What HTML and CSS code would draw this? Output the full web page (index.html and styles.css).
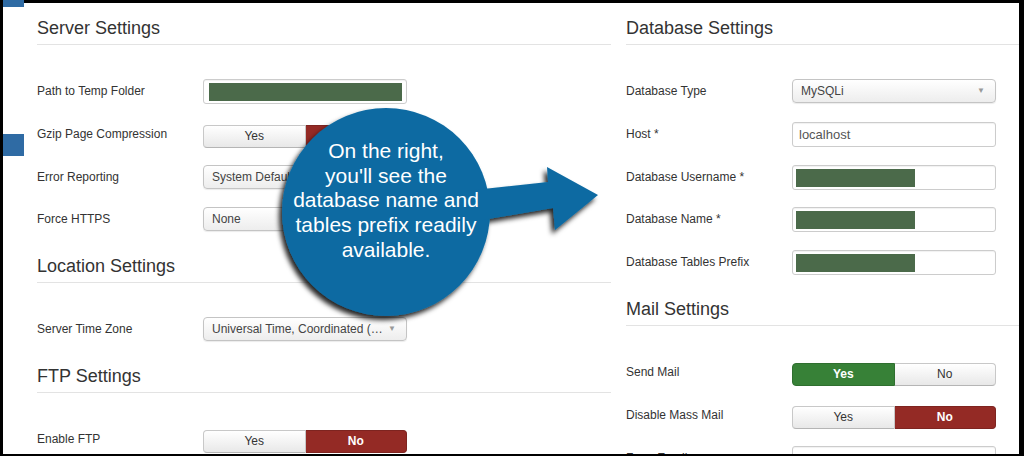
FILE: index.html
```html
<!DOCTYPE html>
<html lang="en">
<head>
<meta charset="utf-8">
<title>Global Configuration - Server</title>
<link rel="stylesheet" href="styles.css">
</head>
<body>
<div class="screen">
  <div class="page">
    <div class="rail">
      <div class="rail-top"></div>
      <div class="rail-tab"></div>
    </div>
    <div class="content">
      <div class="col col-left">
        <div class="section">
          <h3>Server Settings</h3>
          <div class="row">
            <div class="label">Path to Temp Folder</div>
            <div class="input masked"><span class="mask mask-wide"></span></div>
          </div>
          <div class="row">
            <div class="label">Gzip Page Compression</div>
            <div class="toggle"><span class="btn">Yes</span><span class="btn btn-no">No</span></div>
          </div>
          <div class="row">
            <div class="label">Error Reporting</div>
            <div class="select">System Default<span class="caret">&#9660;</span></div>
          </div>
          <div class="row">
            <div class="label">Force HTTPS</div>
            <div class="select">None<span class="caret">&#9660;</span></div>
          </div>
        </div>
        <div class="section">
          <h3>Location Settings</h3>
          <div class="row">
            <div class="label">Server Time Zone</div>
            <div class="select">Universal Time, Coordinated (&hellip;<span class="caret">&#9660;</span></div>
          </div>
        </div>
        <div class="section">
          <h3>FTP Settings</h3>
          <div class="row">
            <div class="label">Enable FTP</div>
            <div class="toggle"><span class="btn">Yes</span><span class="btn btn-no">No</span></div>
          </div>
        </div>
      </div>
      <div class="col col-right">
        <div class="section">
          <h3>Database Settings</h3>
          <div class="row">
            <div class="label">Database Type</div>
            <div class="select">MySQLi<span class="caret">&#9660;</span></div>
          </div>
          <div class="row">
            <div class="label">Host *</div>
            <div class="input">localhost</div>
          </div>
          <div class="row">
            <div class="label">Database Username *</div>
            <div class="input masked"><span class="mask mask-short"></span></div>
          </div>
          <div class="row">
            <div class="label">Database Name *</div>
            <div class="input masked"><span class="mask mask-short"></span></div>
          </div>
          <div class="row">
            <div class="label">Database Tables Prefix</div>
            <div class="input masked"><span class="mask mask-short"></span></div>
          </div>
        </div>
        <div class="section">
          <h3>Mail Settings</h3>
          <div class="row">
            <div class="label">Send Mail</div>
            <div class="toggle"><span class="btn btn-yes">Yes</span><span class="btn">No</span></div>
          </div>
          <div class="row">
            <div class="label">Disable Mass Mail</div>
            <div class="toggle"><span class="btn">Yes</span><span class="btn btn-no">No</span></div>
          </div>
          <div class="row">
            <div class="label">From Email</div>
            <div class="input"></div>
          </div>
        </div>
      </div>
    </div>
  </div>

  <div class="callout">
    <svg class="callout-shape" width="340" height="240" viewBox="0 0 340 240" aria-hidden="true">
      <defs>
        <filter id="shadow" x="-20%" y="-20%" width="140%" height="140%">
          <feDropShadow dx="-3" dy="4" stdDeviation="2.5" flood-color="#000" flood-opacity="0.85"/>
        </filter>
      </defs>
      <g filter="url(#shadow)" fill="#0b6aa2">
        <circle cx="116" cy="112" r="104"/>
        <polygon points="195,91 278,82 277,67 328,95 285,130 283,108 195,123"/>
      </g>
    </svg>
    <div class="callout-text">On the right,<br>you'll see the<br>database name and<br>tables prefix readily<br>available.</div>
  </div>
</div>
</body>
</html>
```
FILE: styles.css
```css
* { box-sizing: border-box; }

html, body {
  margin: 0;
  padding: 0;
  background: #000;
}

body {
  font-family: "Liberation Sans", Arial, sans-serif;
  color: #333;
}

.screen {
  position: relative;
  width: 1024px;
  height: 456px;
  padding: 3px 5px 2px 3px;
  background: #000;
  overflow: hidden;
}

.page {
  display: flex;
  height: 100%;
  background: #fff;
}

.rail {
  width: 21px;
  flex: none;
}

.rail-top {
  margin-top: -3px;
  height: 7px;
  background: #2f6ba4;
}

.rail-tab {
  margin-top: 127px;
  height: 22px;
  background: #2f6ba4;
}

.content {
  flex: 1;
  display: flex;
  gap: 15px;
  padding: 15px 0 0 13px;
  overflow: hidden;
}

.col-left {
  width: 574px;
  flex: none;
}

.col-right {
  flex: 1;
}

.section {
  display: flow-root;
}

.section + .section {
  padding-top: 6px;
}

h3 {
  margin: 0 0 34px;
  padding-bottom: 6px;
  font-size: 18px;
  line-height: 20px;
  font-weight: normal;
  color: #333;
  border-bottom: 1px solid #e3e3e3;
}

.row {
  display: flex;
  height: 25px;
  margin-bottom: 17.8px;
}

.label {
  width: 166px;
  flex: none;
  padding-top: 5px;
  font-size: 12px;
  line-height: 14px;
  color: #333;
}

.input,
.select,
.toggle {
  width: 204px;
  flex: none;
  color: #555;
}

.input {
  height: 25px;
  padding: 0 6px;
  font-size: 13px;
  line-height: 23px;
  background: #fff;
  border: 1px solid #ccc;
  border-radius: 3px;
  box-shadow: inset 0 1px 1px rgba(0, 0, 0, 0.06);
}

.input.masked {
  padding: 3px 4px 3px 3px;
}

.mask {
  display: block;
  height: 18px;
  background: #4b6a4a;
}

.mask-wide {
  margin-left: 2px;
}

.mask-short {
  width: 119px;
}

.select {
  position: relative;
  height: 24px;
  padding: 0 24px 0 8px;
  font-size: 12px;
  line-height: 22px;
  white-space: nowrap;
  overflow: hidden;
  color: #444;
  background: linear-gradient(#ffffff, #ededed);
  border: 1px solid #c4c4c4;
  border-radius: 4px;
  box-shadow: 0 1px 1px rgba(0, 0, 0, 0.08);
}

.caret {
  position: absolute;
  right: 10px;
  top: 0;
  font-size: 8px;
  line-height: 22px;
  color: #999;
}

.toggle {
  display: flex;
  height: 23px;
  margin-top: 3px;
  font-size: 12px;
}

.btn {
  flex: 1;
  text-align: center;
  line-height: 21px;
  color: #333;
  background: linear-gradient(#ffffff, #e8e8e8);
  border: 1px solid #c8c8c8;
  border-bottom-color: #b5b5b5;
}

.btn:first-child {
  border-radius: 4px 0 0 4px;
}

.btn:last-child {
  border-radius: 0 4px 4px 0;
  border-left: none;
}

.btn-no {
  color: #fff;
  font-weight: bold;
  background: #942a25;
  border-color: #7e2420;
}

.btn-yes {
  color: #fff;
  font-weight: bold;
  background: #378137;
  border-color: #2f6f2f;
}

.callout {
  position: absolute;
  left: 270px;
  top: 100px;
  width: 340px;
  height: 240px;
}

.callout-shape {
  display: block;
}

.callout-text {
  position: absolute;
  left: 12px;
  top: 39px;
  width: 208px;
  text-align: center;
  color: #fff;
  font-size: 21px;
  line-height: 24.7px;
}
```
